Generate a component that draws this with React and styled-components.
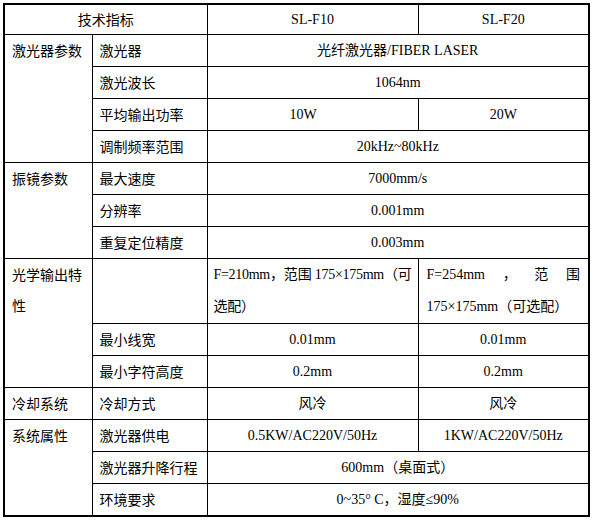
import React from "react";
import styled, { createGlobalStyle } from "styled-components";

const GlobalStyle = createGlobalStyle`
  body {
    margin: 3px;
    background: #fff;
    color: #000;
    font-family: "Liberation Serif", "Noto Sans CJK SC", serif;
    font-size: 14px;
  }
`;

const Table = styled.table`
  width: 586px;
  table-layout: fixed;
  border-collapse: collapse;
  border: 2px solid #000;
`;

const Cell = styled.td`
  border: 1px solid #000;
  padding: 0 ${(p) => p.$padR || p.$pad || "7px"} 0 ${(p) => p.$pad || "7px"};
  vertical-align: top;
  text-align: ${(p) => p.$align || "center"};
  text-align-last: ${(p) => (p.$align === "justify" ? "left" : "auto")};
  letter-spacing: ${(p) => p.$tight || "normal"};
  font-family: ${(p) =>
    p.$cjk
      ? `"Noto Sans CJK SC", sans-serif`
      : `"Liberation Serif", "Noto Sans CJK SC", serif`};
`;

const Box = styled.div`
  height: ${(p) => (p.$auto ? "auto" : `${(p.$lines || 1) * p.$lh}px`)};
  line-height: ${(p) => p.$lh}px;
  white-space: ${(p) => (p.$lines > 1 || p.$auto ? "normal" : "nowrap")};
`;

const Label = ({ children, rows }) => (
  <Cell rowSpan={rows} $cjk $align="left">
    <Box $lh={31} $auto>
      {children}
    </Box>
  </Cell>
);

const Value = ({ children, span, padR, lh = 31 }) => (
  <Cell colSpan={span} $padR={padR}>
    <Box $lh={lh}>{children}</Box>
  </Cell>
);

const groups = [
  {
    group: "激光器参数",
    items: [
      ["激光器", ["光纤激光器/FIBER LASER"]],
      ["激光波长", ["1064nm"]],
      ["平均输出功率", ["10W", "20W"]],
      ["调制频率范围", ["20kHz~80kHz"]],
    ],
  },
  {
    group: "振镜参数",
    items: [
      ["最大速度", ["7000mm/s"]],
      ["分辨率", ["0.001mm"]],
      ["重复定位精度", ["0.003mm"]],
    ],
  },
];

export default function App() {
  return (
    <>
      <GlobalStyle />
      <Table>
        <colgroup>
          <col style={{ width: 88 }} />
          <col style={{ width: 115 }} />
          <col style={{ width: 211 }} />
          <col style={{ width: 171 }} />
        </colgroup>
        <tbody>
          <tr>
            <Cell colSpan={2} $cjk>
              <Box $lh={29}>技术指标</Box>
            </Cell>
            <Value lh={29}>SL-F10</Value>
            <Value lh={29}>SL-F20</Value>
          </tr>
          {groups.map((g) =>
            g.items.map(([label, vals], i) => (
              <tr key={label}>
                {i === 0 && <Label rows={g.items.length}>{g.group}</Label>}
                <Label>{label}</Label>
                {vals.length === 1 ? (
                  <Value span={2}>{vals[0]}</Value>
                ) : (
                  <>
                    <Value padR="26px">{vals[0]}</Value>
                    <Value>{vals[1]}</Value>
                  </>
                )}
              </tr>
            ))
          )}
          <tr>
            <Label rows={3}>光学输出特性</Label>
            <Label />
            <Cell $align="justify" $pad="6px" $tight="-0.3px">
              <Box $lh={32} $lines={2}>
                F=210mm，范围 175×175mm（可选配）
              </Box>
            </Cell>
            <Cell $align="justify" $pad="8px">
              <Box $lh={32} $lines={2}>
                F=254mm，范围 175×175mm（可选配）
              </Box>
            </Cell>
          </tr>
          <tr>
            <Label>最小线宽</Label>
            <Value>0.01mm</Value>
            <Value>0.01mm</Value>
          </tr>
          <tr>
            <Label>最小字符高度</Label>
            <Value>0.2mm</Value>
            <Value>0.2mm</Value>
          </tr>
          <tr>
            <Label>冷却系统</Label>
            <Label>冷却方式</Label>
            <Value>风冷</Value>
            <Value>风冷</Value>
          </tr>
          <tr>
            <Label rows={3}>系统属性</Label>
            <Label>激光器供电</Label>
            <Value>0.5KW/AC220V/50Hz</Value>
            <Value>1KW/AC220V/50Hz</Value>
          </tr>
          <tr>
            <Label>激光器升降行程</Label>
            <Value span={2}>600mm（桌面式）</Value>
          </tr>
          <tr>
            <Label>环境要求</Label>
            <Value span={2}>0~35° C，湿度≤90%</Value>
          </tr>
        </tbody>
      </Table>
    </>
  );
}
